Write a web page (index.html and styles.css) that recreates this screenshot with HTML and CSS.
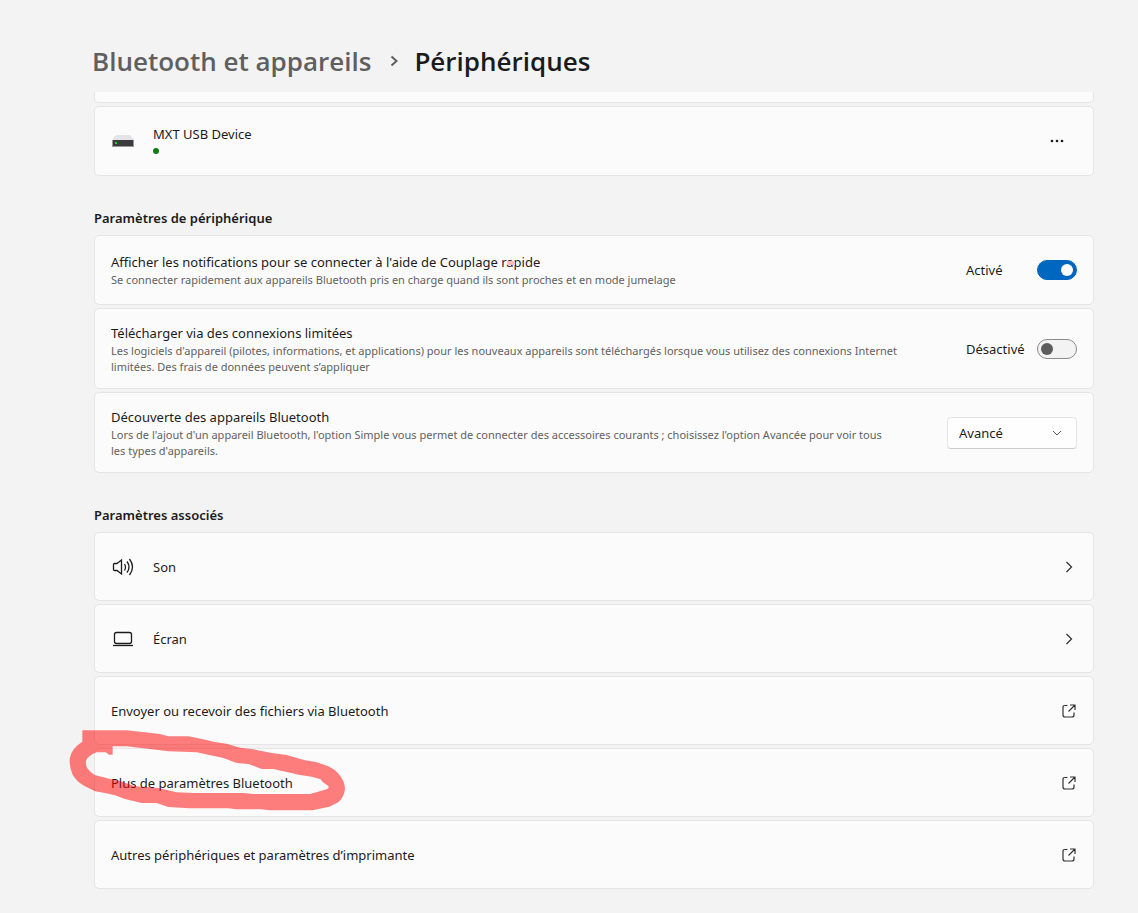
FILE: index.html
```html
<!DOCTYPE html>
<html lang="fr">
<head>
  <meta charset="UTF-8">
  <meta name="viewport" content="width=device-width, initial-scale=1.0">
  <link rel="stylesheet" href="styles.css">
  <title>Bluetooth et appareils - Périphériques</title>
</head>
<body>

  <header class="breadcrumb">
    <a href="#">Bluetooth et appareils</a>
    <svg class="crumb-arrow" width="9" height="12" viewBox="0 0 9 12"><path d="M1.5 1.5 L6.5 6 L1.5 10.5"/></svg>
    <h1>Périphériques</h1>
  </header>

  <main>
    <section class="cards">
      <div class="card cut"></div>
      <div class="card">
        <svg class="icon" width="24" height="24" viewBox="0 0 24 24">
          <path d="M5 6h14l4 5H1z" fill="#e3e3e8"/>
          <rect x="1" y="11" width="22" height="7" fill="#999"/>
          <rect x="2" y="11" width="20" height="6" fill="#3b3b3b"/>
          <rect x="4" y="13" width="2" height="2" fill="#1fd51f"/>
        </svg>
        <div class="text">
          <div class="title">MXT USB Device</div>
          <span class="status"></span>
        </div>
        <button type="button" class="more" aria-label="Plus d'options">
          <svg width="14" height="4" viewBox="0 0 14 4"><circle cx="2" cy="2" r="1.3"/><circle cx="7" cy="2" r="1.3"/><circle cx="12" cy="2" r="1.3"/></svg>
        </button>
      </div>
    </section>

    <h2>Paramètres de périphérique</h2>
    <section class="cards">
      <div class="card">
        <div class="text">
          <label class="title" for="couplage">Afficher les notifications pour se connecter à l'aide de Couplage r<span class="marked">a</span>pide</label>
          <p>Se connecter rapidement aux appareils Bluetooth pris en charge quand ils sont proches et en mode jumelage</p>
        </div>
        <div class="switch">
          <span>Activé</span>
          <input type="checkbox" id="couplage" checked>
        </div>
      </div>
      <div class="card tall">
        <div class="text">
          <label class="title" for="limitees">Télécharger via des connexions limitées</label>
          <p>Les logiciels d'appareil (pilotes, informations, et applications) pour les nouveaux appareils sont téléchargés lorsque vous utilisez des connexions Internet limitées. Des frais de données peuvent s’appliquer</p>
        </div>
        <div class="switch">
          <span>Désactivé</span>
          <input type="checkbox" id="limitees">
        </div>
      </div>
      <div class="card tall">
        <div class="text">
          <label class="title" for="decouverte">Découverte des appareils Bluetooth</label>
          <p>Lors de l'ajout d'un appareil Bluetooth, l'option Simple vous permet de connecter des accessoires courants ; choisissez l'option Avancée pour voir tous les types d'appareils.</p>
        </div>
        <div class="dropdown">
          <select id="decouverte">
            <option>Simple</option>
            <option selected>Avancé</option>
          </select>
          <svg width="10" height="6" viewBox="0 0 10 6"><path d="M1 1 L5 5 L9 1"/></svg>
        </div>
      </div>
    </section>

    <h2>Paramètres associés</h2>
    <section class="cards links">
      <a class="card" href="#">
        <svg class="icon line" width="24" height="24" viewBox="0 0 24 24">
          <path d="M6 8.500 L10.500 5 V19 L6 15.500 H3.500 Q2.500 15.500 2.500 14.500 V9.500 Q2.500 8.500 3.500 8.500 Z"/>
          <path d="M13.500 9 Q15.500 12 13.500 15.500 M16 6.500 Q20 12 16 17.500 M18.500 4 Q24.500 12 18.500 20"/>
        </svg>
        <span class="text">Son</span>
        <svg class="go" width="8" height="12" viewBox="0 0 8 12"><path d="M1.5 1 L6.5 6 L1.5 11"/></svg>
      </a>
      <a class="card" href="#">
        <svg class="icon line" width="24" height="24" viewBox="0 0 24 24">
          <rect x="3.500" y="5.500" width="17" height="11" rx="2"/>
          <path d="M2 18.500 H22"/>
        </svg>
        <span class="text">Écran</span>
        <svg class="go" width="8" height="12" viewBox="0 0 8 12"><path d="M1.5 1 L6.5 6 L1.5 11"/></svg>
      </a>
      <a class="card" href="#">
        <span class="text">Envoyer ou recevoir des fichiers via Bluetooth</span>
        <svg class="open" width="14" height="14" viewBox="0 0 14 14"><path d="M5.500 1.500 H3 Q1 1.500 1 3.500 V11 Q1 13 3 13 H10 Q12 13 12 11 V8.500 M8 1 H13 V6 M13 1 L6.500 7.500"/></svg>
      </a>
      <a class="card circled" href="#">
        <span class="text">Plus de paramètres Bluetooth</span>
        <svg class="open" width="14" height="14" viewBox="0 0 14 14"><path d="M5.500 1.500 H3 Q1 1.500 1 3.500 V11 Q1 13 3 13 H10 Q12 13 12 11 V8.500 M8 1 H13 V6 M13 1 L6.500 7.500"/></svg>
        <!-- red marker loop -->
        <svg class="marker" width="300" height="100" viewBox="0 0 900 300">
          <path fill-rule="evenodd" d="M67 31 H200 L300 42 L325 49 H385 L430 58 L465 66 L500 71 L540 83 L580 88 L635 99 L680 105 L735 121 L768 126 L805 139 Q832 152 844 173 Q854 185 855 208 Q852 232 836 246 L808 260 L758 271 H628 L605 268 H530 L505 265 H388 L325 261 L290 249 H245 L195 237 L165 226 L135 219 L105 214 L72 197 Q48 184 37 162 Q26 135 30 112 Q36 84 67 65 Z M158 79 V104 H147 L137 97 H110 Q86 106 79 120 Q75 132 82 145 Q90 157 104 165 L150 177 L180 183 L225 199 L295 204 L350 217 L400 219 H550 L580 222 H750 L800 208 Q810 202 804 197 Q787 188 782 178 L755 170 L720 165 L640 147 H605 L565 132 L530 129 L490 114 L410 97 L325 94 L245 84 L200 79 Z"/>
        </svg>
      </a>
      <a class="card" href="#">
        <span class="text">Autres périphériques et paramètres d’imprimante</span>
        <svg class="open" width="14" height="14" viewBox="0 0 14 14"><path d="M5.500 1.500 H3 Q1 1.500 1 3.500 V11 Q1 13 3 13 H10 Q12 13 12 11 V8.500 M8 1 H13 V6 M13 1 L6.500 7.500"/></svg>
      </a>
    </section>
  </main>

</body>
</html>
```
FILE: styles.css
```css
* {
  box-sizing: border-box;
}

body {
  margin: 0;
  padding: 0 44px 24px 94px;
  background: #f3f3f3;
  color: #1b1b1b;
  font-family: "Noto Sans", "Open Sans", sans-serif;
  font-size: 13px;
  line-height: 20px;
}

svg {
  display: block;
  flex: none;
  fill: none;
}

.breadcrumb {
  display: flex;
  align-items: center;
  height: 92px;
  padding-top: 30px;
  margin-left: -2px;
  font-family: "Open Sans", sans-serif;
  font-size: 26px;
  line-height: 36px;
  font-weight: 600;
}

.breadcrumb a {
  color: #5f5f5f;
  text-decoration: none;
}

.breadcrumb h1 {
  margin: 0;
  font-size: 26px;
  font-weight: 600;
}

.crumb-arrow {
  margin: 0 15px 0 19px;
  stroke: #5f5f5f;
  stroke-width: 2;
}

h2 {
  margin: 32px 0 7px;
  font-size: 13px;
  line-height: 20px;
  font-weight: 600;
}

.cards {
  display: flex;
  flex-direction: column;
  gap: 3px;
}

.card {
  position: relative;
  display: flex;
  align-items: center;
  min-height: 70px;
  padding: 0 16px;
  background: #fbfbfb;
  border: 1px solid #e5e5e5;
  border-radius: 5px;
  color: inherit;
  text-decoration: none;
}

.card.cut {
  min-height: 11px;
  border-top: none;
  border-radius: 0 0 5px 5px;
}

.card.tall {
  min-height: 81px;
}

.links .card {
  min-height: 69px;
}

.icon {
  margin-right: 18px;
}

.line {
  stroke: #1b1b1b;
  stroke-width: 1.3;
}

.text {
  flex: 1;
}

.title {
  display: block;
  line-height: 20px;
}

.text p {
  margin: 0;
  color: #616161;
  font-size: 11px;
  line-height: 16px;
}

.status {
  display: block;
  width: 6px;
  height: 6px;
  margin: 4px 0;
  border-radius: 50%;
  background: #107c10;
}

.more {
  padding: 10px 13px;
  border: none;
  background: none;
}

.more svg {
  fill: #1b1b1b;
}

.marked {
  position: relative;
}

.marked::after {
  content: "";
  position: absolute;
  left: 1px;
  top: 8px;
  width: 8px;
  height: 4px;
  background: #ffbcbc;
}

.switch {
  display: flex;
  align-items: center;
  justify-content: space-between;
  width: 111px;
  margin-left: 24px;
}

.switch input {
  appearance: none;
  display: flex;
  align-items: center;
  width: 40px;
  height: 20px;
  margin: 0;
  padding: 0 3px;
  border: 1px solid #8a8a8a;
  border-radius: 10px;
  background: #f3f3f3;
}

.switch input::before {
  content: "";
  width: 12px;
  height: 12px;
  border-radius: 50%;
  background: #5d5d5d;
}

.switch input:checked {
  justify-content: flex-end;
  border-color: #0067c0;
  background: #0067c0;
}

.switch input:checked::before {
  background: #fff;
}

.dropdown {
  position: relative;
  margin-left: 52px;
}

.dropdown select {
  appearance: none;
  display: block;
  width: 130px;
  height: 32px;
  padding: 0 11px;
  border: 1px solid #e5e5e5;
  border-bottom-color: #ccc;
  border-radius: 4px;
  background: #fefefe;
  color: inherit;
  font: inherit;
}

.dropdown svg {
  position: absolute;
  right: 15px;
  top: 13px;
  stroke: #5d5d5d;
  pointer-events: none;
}

.go {
  margin-right: 4px;
  stroke: #333;
  stroke-width: 1.3;
}

.open {
  margin-right: 1px;
  stroke: #333;
  stroke-width: 1.2;
}

.circled {
  z-index: 1;
}

.marker {
  position: absolute;
  left: -35px;
  top: -29px;
  fill: rgba(255, 0, 0, 0.5);
  pointer-events: none;
}
```
